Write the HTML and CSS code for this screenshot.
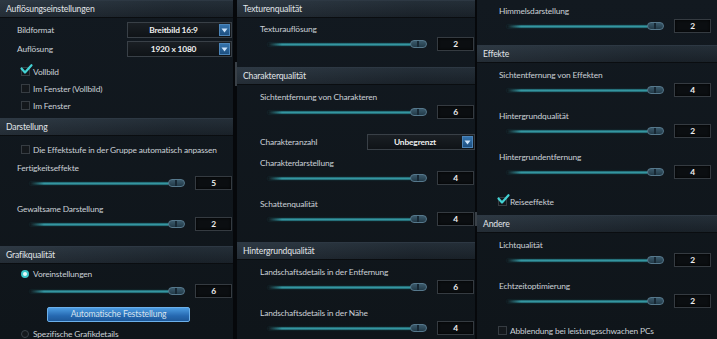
FILE: index.html
```html
<!DOCTYPE html>
<html lang="de">
<head>
    <meta charset="UTF-8">
    <meta name="viewport" content="width=device-width, initial-scale=1.0">
    <title>Grafikeinstellungen</title>
    <link rel="stylesheet" href="styles.css">
</head>
<body>
<div class="screen">

    <!-- Spalte 1 -->
    <div class="col col-1">
        <section class="group">
            <h2 class="group-title">Auflösungseinstellungen</h2>
            <div class="group-body body-first">
                <div class="choice">
                    <span>Bildformat</span>
                    <div class="dropdown"><span class="dropdown-text">Breitbild 16:9</span><span class="dropdown-btn"><svg width="7" height="5" viewBox="0 0 7 5"><path d="M0.5 0.5 H6.5 L3.5 4.5 Z" fill="#cde4fb"/></svg></span></div>
                </div>
                <div class="choice">
                    <span>Auflösung</span>
                    <div class="dropdown"><span class="dropdown-text">1920 x 1080</span><span class="dropdown-btn"><svg width="7" height="5" viewBox="0 0 7 5"><path d="M0.5 0.5 H6.5 L3.5 4.5 Z" fill="#cde4fb"/></svg></span></div>
                </div>
                <div class="check on"><span class="box"><svg width="13" height="10" viewBox="0 0 13 10"><path d="M1.5 4.5 L5 8.5 L11.5 1.2" fill="none" stroke="#43d2d4" stroke-width="2.2" stroke-linecap="round" stroke-linejoin="round"/></svg></span>Vollbild</div>
                <div class="check"><span class="box"></span>Im Fenster (Vollbild)</div>
                <div class="check"><span class="box"></span>Im Fenster</div>
            </div>
        </section>

        <section class="group">
            <h2 class="group-title">Darstellung</h2>
            <div class="group-body body-b14">
                <div class="check"><span class="box"></span>Die Effektstufe in der Gruppe automatisch anpassen</div>
                <div class="setting">
                    <span class="label">Fertigkeitseffekte</span>
                    <div class="slider"><span class="track"></span><span class="knob"></span><span class="value">5</span></div>
                </div>
                <div class="setting">
                    <span class="label">Gewaltsame Darstellung</span>
                    <div class="slider"><span class="track"></span><span class="knob"></span><span class="value">2</span></div>
                </div>
            </div>
        </section>

        <section class="group">
            <h2 class="group-title">Grafikqualität</h2>
            <div class="group-body body-t1">
                <div class="radio on"><span class="dot"></span>Voreinstellungen</div>
                <div class="slider"><span class="track"></span><span class="knob"></span><span class="value">6</span></div>
                <button class="auto-btn">Automatische Feststellung</button>
                <div class="radio"><span class="dot"></span>Spezifische Grafikdetails</div>
            </div>
        </section>
    </div>

    <div class="gutter"><span class="scroll-thumb thumb-a"></span></div>

    <!-- Spalte 2 -->
    <div class="col col-2">
        <section class="group">
            <h2 class="group-title">Texturenqualität</h2>
            <div class="group-body body-t4">
                <div class="setting">
                    <span class="label">Texturauflösung</span>
                    <div class="slider"><span class="track"></span><span class="knob"></span><span class="value">2</span></div>
                </div>
            </div>
        </section>

        <section class="group">
            <h2 class="group-title">Charakterqualität</h2>
            <div class="group-body">
                <div class="setting">
                    <span class="label">Sichtentfernung von Charakteren</span>
                    <div class="slider"><span class="track"></span><span class="knob"></span><span class="value">6</span></div>
                </div>
                <div class="choice">
                    <span>Charakteranzahl</span>
                    <div class="dropdown wide"><span class="dropdown-text">Unbegrenzt</span><span class="dropdown-btn"><svg width="7" height="5" viewBox="0 0 7 5"><path d="M0.5 0.5 H6.5 L3.5 4.5 Z" fill="#cde4fb"/></svg></span></div>
                </div>
                <div class="setting">
                    <span class="label">Charakterdarstellung</span>
                    <div class="slider"><span class="track"></span><span class="knob"></span><span class="value">4</span></div>
                </div>
                <div class="setting">
                    <span class="label">Schattenqualität</span>
                    <div class="slider"><span class="track"></span><span class="knob"></span><span class="value">4</span></div>
                </div>
            </div>
        </section>

        <section class="group">
            <h2 class="group-title">Hintergrundqualität</h2>
            <div class="group-body">
                <div class="setting">
                    <span class="label">Landschaftsdetails in der Entfernung</span>
                    <div class="slider"><span class="track"></span><span class="knob"></span><span class="value">6</span></div>
                </div>
                <div class="setting">
                    <span class="label">Landschaftsdetails in der Nähe</span>
                    <div class="slider"><span class="track"></span><span class="knob"></span><span class="value">4</span></div>
                </div>
            </div>
        </section>
    </div>

    <div class="gutter narrow"><span class="scroll-thumb thumb-b"></span></div>

    <!-- Spalte 3 (gescrollt) -->
    <div class="col col-3">
        <section class="group">
            <div class="group-body body-cut">
                <div class="setting">
                    <span class="label">Himmelsdarstellung</span>
                    <div class="slider"><span class="track"></span><span class="knob"></span><span class="value">2</span></div>
                </div>
            </div>
        </section>

        <section class="group">
            <h2 class="group-title">Effekte</h2>
            <div class="group-body body-b5">
                <div class="setting">
                    <span class="label">Sichtentfernung von Effekten</span>
                    <div class="slider"><span class="track"></span><span class="knob"></span><span class="value">4</span></div>
                </div>
                <div class="setting">
                    <span class="label">Hintergrundqualität</span>
                    <div class="slider"><span class="track"></span><span class="knob"></span><span class="value">2</span></div>
                </div>
                <div class="setting">
                    <span class="label">Hintergrundentfernung</span>
                    <div class="slider"><span class="track"></span><span class="knob"></span><span class="value">4</span></div>
                </div>
                <div class="check on"><span class="box"><svg width="13" height="10" viewBox="0 0 13 10"><path d="M1.5 4.5 L5 8.5 L11.5 1.2" fill="none" stroke="#43d2d4" stroke-width="2.2" stroke-linecap="round" stroke-linejoin="round"/></svg></span>Reiseeffekte</div>
            </div>
        </section>

        <section class="group">
            <h2 class="group-title">Andere</h2>
            <div class="group-body">
                <div class="setting">
                    <span class="label">Lichtqualität</span>
                    <div class="slider"><span class="track"></span><span class="knob"></span><span class="value">2</span></div>
                </div>
                <div class="setting">
                    <span class="label">Echtzeitoptimierung</span>
                    <div class="slider"><span class="track"></span><span class="knob"></span><span class="value">2</span></div>
                </div>
                <div class="check"><span class="box"></span>Abblendung bei leistungsschwachen PCs</div>
            </div>
        </section>
    </div>

</div>
</body>
</html>
```

FILE: styles.css
```css
* {
    box-sizing: border-box;
}
body {
    margin: 0;
    background: #06080b;
    font-family: Lato, "Open Sans", sans-serif;
    font-size: 8.4px;
    letter-spacing: -0.15px;
    color: #cbd1d6;
}
.screen {
    display: flex;
    width: 717px;
    height: 339px;
    overflow: hidden;
    background: #06080b;
}
.col {
    height: 339px;
    overflow: hidden;
    background: linear-gradient(#121920, #0f151a);
}
.col-1 {
    width: 233px;
    --label-x: 17px;
    --track-x: 30px;
    --end-x: 1px;
}
.col-2 {
    width: 238px;
    --label-x: 23px;
    --track-x: 31px;
    --end-x: 1px;
}
.col-3 {
    width: 240px;
    --label-x: 22px;
    --track-x: 30px;
    --end-x: 6px;
}
.gutter {
    width: 4px;
    display: flex;
    flex-direction: column;
}
.gutter.narrow {
    width: 2px;
}
.scroll-thumb {
    display: block;
    width: 2px;
    margin-left: 2px;
    background: #3a4148;
}
.thumb-a {
    margin-top: 62px;
    height: 24px;
}
.thumb-b {
    margin-left: 0;
    margin-top: 212px;
    height: 14px;
}

/* Gruppen */
.group-title {
    margin: 0;
    height: 18px;
    line-height: 16px;
    padding-left: 6px;
    font-size: 8.6px;
    font-weight: normal;
    color: #e1e5e9;
    background:
        linear-gradient(90deg, rgba(130, 150, 170, 0.13), rgba(130, 150, 170, 0.03) 75%),
        linear-gradient(#212b34, #161d24);
    border-top: 1px solid #2d3843;
    border-bottom: 1px solid #0a0d10;
}
.group-body {
    display: flex;
    flex-direction: column;
    padding: 5px 0 15px;
}
.body-first {
    padding: 4px 0 4px;
}
.body-b14 {
    padding-bottom: 14px;
}
.body-t1 {
    padding: 1px 0 0;
}
.body-t4 {
    padding-top: 4px;
}
.body-cut {
    padding: 4px 0 11px;
}
.body-b5 {
    padding-bottom: 5px;
}

/* Regler */
.label {
    display: block;
    height: 14px;
    line-height: 14px;
    padding-left: var(--label-x);
    white-space: nowrap;
}
.slider {
    display: flex;
    align-items: center;
    height: 16px;
    padding: 0 var(--end-x) 0 var(--track-x);
}
.track {
    flex: 1;
    height: 3px;
    border-radius: 1px;
    background:
        linear-gradient(90deg, #10171c 0, rgba(16, 23, 28, 0) 14px),
        linear-gradient(#1e5c66, #3596a0 50%, #1e5c66);
    box-shadow: 0 0 2px rgba(40, 140, 150, 0.35);
}
.knob {
    width: 17px;
    height: 8px;
    margin-left: -1px;
    border-radius: 4px;
    border: 1px solid #56788c;
    background:
        linear-gradient(90deg, transparent 6px, #172733 6px, #172733 8px, transparent 8px),
        linear-gradient(#3b5a6c, #223a48);
}
.value {
    width: 37px;
    height: 14px;
    margin-left: 10px;
    background: #0b0e11;
    border: 1px solid #353b41;
    box-shadow: inset 0 0 3px #000;
    text-align: center;
    line-height: 12px;
    color: #f0f0f0;
    font-weight: bold;
}

/* Auswahlfelder */
.choice {
    display: flex;
    align-items: center;
    height: 16px;
    padding: 0 var(--end-x) 0 var(--label-x);
}
.dropdown {
    display: flex;
    align-items: center;
    width: 105px;
    height: 16px;
    margin-left: auto;
    background: linear-gradient(#1a1f24, #0f1317);
    border: 1px solid #394047;
}
.dropdown.wide {
    width: 108px;
    margin-right: -1px;
}
.dropdown-text {
    flex: 1;
    text-align: center;
    color: #eeeeee;
    font-weight: bold;
}
.dropdown-btn {
    display: flex;
    align-items: center;
    justify-content: center;
    width: 11px;
    height: 12px;
    margin-right: 1px;
    background: linear-gradient(#3573ac, #1d4f80);
    border: 1px solid #4b84b8;
}

/* Kontrollkästchen */
.check,
.radio {
    display: flex;
    align-items: center;
    gap: 3px;
    height: 17px;
    padding-left: 21px;
    white-space: nowrap;
}
.box {
    position: relative;
    width: 9px;
    height: 9px;
    background: #14181c;
    border: 1px solid #363c42;
}
.box svg {
    position: absolute;
    left: -2px;
    top: -4px;
}
.dot {
    width: 8px;
    height: 8px;
    margin-right: 1px;
    border-radius: 50%;
    background: #14181c;
    border: 1px solid #3c444b;
}
.radio.on .dot {
    border: 2px solid #3cc7c9;
    background: #eafcfc;
}

/* Buttons */
.auto-btn {
    display: block;
    width: 143px;
    height: 15px;
    margin-left: 47px;
    padding: 0;
    font-family: inherit;
    font-size: 8.6px;
    letter-spacing: inherit;
    line-height: 13px;
    color: #d5e3ef;
    text-align: center;
    background: linear-gradient(#4c9de2, #2669b1 60%, #1d5899);
    border: 1px solid #6cb0ea;
    border-radius: 2px;
}

/* Abstände */
.setting + .setting { margin-top: 11px; }
.choice + .choice { margin-top: 3px; }
.setting + .choice { margin-top: 14px; }
.choice + .setting { margin-top: 6px; }
.choice + .check { margin-top: 6px; }
.check + .setting { margin-top: 3px; }
.setting + .check { margin-top: 13px; }
.radio + .slider { margin-top: 1px; }
.slider + .auto-btn { margin-top: 8px; }
.auto-btn + .radio { margin-top: 3px; }
```
